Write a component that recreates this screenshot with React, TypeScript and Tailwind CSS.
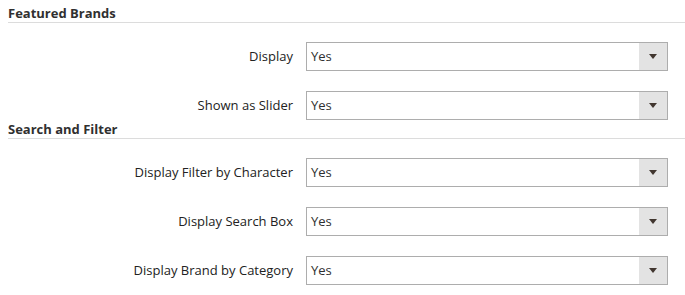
import React from "react";

function Select() {
  return (
    <div className="ml-[13px] flex h-[29px] w-[362px] border border-[#adadad] bg-white">
      <div className="flex flex-1 items-center pl-[4px] text-[13px] text-[#303030]">Yes</div>
      <div className="flex w-[28px] items-center justify-center bg-[#e3e3e3]">
        <svg width="8" height="5" viewBox="0 0 8 5">
          <polygon points="0,0 8,0 4,5" fill="#41362f" />
        </svg>
      </div>
    </div>
  );
}

function Row({ label }: { label: string }) {
  return (
    <div className="flex items-center">
      <div className="w-[293px] text-right text-[13px] font-normal text-[#222]">{label}</div>
      <Select />
    </div>
  );
}

function Heading({ title, first }: { title: string; first?: boolean }) {
  return (
    <div
      className={
        "ml-[8px] border-b border-[#dcdcdc] text-[13px] font-bold leading-[18px] text-[#303030] " +
        (first ? "pt-[4px]" : "")
      }
    >
      {title}
    </div>
  );
}

export default function App() {
  return (
    <div
      className="h-[295px] w-[685px] bg-white"
      style={{ fontFamily: '"Open Sans", sans-serif' }}
    >
      <Heading title="Featured Brands" first />
      <div className="flex flex-col gap-[20px] pt-[19px]">
        <Row label="Display" />
        <Row label="Shown as Slider" />
      </div>
      <Heading title="Search and Filter" />
      <div className="flex flex-col gap-[20px] pt-[19px]">
        <Row label="Display Filter by Character" />
        <Row label="Display Search Box" />
        <Row label="Display Brand by Category" />
      </div>
    </div>
  );
}
